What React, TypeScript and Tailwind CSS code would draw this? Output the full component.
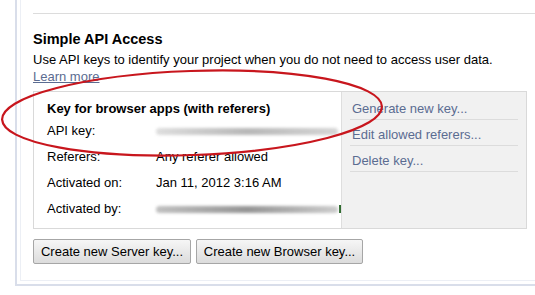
import React from "react";

const font = { fontFamily: '"Liberation Sans", Arial, sans-serif' };

const ROWS = [
  { label: "API key:", value: "blur" },
  { label: "Referers:", value: "Any referer allowed" },
  { label: "Activated on:", value: "Jan 11, 2012 3:16 AM" },
  { label: "Activated by:", value: "blur2" },
];

const ACTIONS = ["Generate new key...", "Edit allowed referers...", "Delete key..."];

function Smear({ green }: { green?: boolean }) {
  return (
    <div className="relative flex h-[26px] items-center">
      <div
        className={`h-[7px] w-[182px] rounded-sm bg-gradient-to-r blur-[1.5px] ${
          green
            ? "from-[#b0b0b0] via-[#7a7a7a] to-[#c0c0c0] opacity-80"
            : "from-[#d0d0d0] via-[#9a9a9a] to-[#c4c4c4] opacity-70"
        }`}
      />
      {green && <span className="ml-[1px] h-[8px] w-[2px] bg-[#2f6b2f]" />}
    </div>
  );
}

export default function App() {
  return (
    <div className="relative h-[295px] w-[535px] overflow-hidden bg-white text-[13px] text-black" style={font}>
      {/* outer frame */}
      <div className="ml-[15px] w-[540px] border-b-2 border-l-2 border-[#d9deea] pb-[3px] pl-[3px]">
        <div className="border-b border-l border-[#eceff5] pb-[16px] pl-[12px]">
          <div className="pt-[13px]">
            <div className="border-t border-[#dcdcdc] pt-[17px]">
              <h2 className="text-[14.5px] font-bold leading-[16px]">Simple API Access</h2>
              <p className="mt-[4px] leading-[18px]">
                Use API keys to identify your project when you do not need to access user data.
              </p>
              <a className="block leading-[16px] text-[#5b6c91] underline">Learn more</a>
            </div>
          </div>

          {/* key box */}
          <div className="mt-[6px] flex h-[138px] w-[494px] border border-[#d9d9d9]">
            <div className="w-[307px] bg-white pl-[13px] pt-[9px]">
              <div className="font-bold leading-[16px]">Key for browser apps (with referers)</div>
              <div className="mt-[1px]">
                {ROWS.map((r) => (
                  <div key={r.label} className="flex h-[26px] leading-[26px]">
                    <span className="w-[109px]">{r.label}</span>
                    {r.value === "blur" ? (
                      <Smear />
                    ) : r.value === "blur2" ? (
                      <Smear green />
                    ) : (
                      <span>{r.value}</span>
                    )}
                  </div>
                ))}
              </div>
            </div>
            <div className="flex-1 border-l border-[#dedede] bg-[#f1f1f1] px-[8px] pt-[2px]">
              {ACTIONS.map((a) => (
                <div key={a} className="border-b border-[#dcdcdc] pb-[2px] pl-[2px] pt-[7px] leading-[16px] text-[#5b6c91]">
                  {a}
                </div>
              ))}
            </div>
          </div>

          {/* buttons */}
          <div className="mt-[10px] flex gap-[5px]">
            <button className="h-[25px] w-[158px] rounded-[2px] border border-[#a6a6a6] bg-gradient-to-b from-[#f6f6f6] to-[#dcdcdc] text-[13px]">
              Create new Server key...
            </button>
            <button className="h-[25px] w-[167px] rounded-[2px] border border-[#a6a6a6] bg-gradient-to-b from-[#f6f6f6] to-[#dcdcdc] text-[13px]">
              Create new Browser key...
            </button>
          </div>
        </div>
      </div>

      {/* red hand-drawn ellipse */}
      <svg className="pointer-events-none absolute left-0 top-0" width="535" height="295" viewBox="0 0 535 295">
        <ellipse
          cx="192"
          cy="113"
          rx="190"
          ry="42"
          transform="rotate(-2 192 113)"
          fill="none"
          stroke="#c8161d"
          strokeWidth="2.2"
        />
      </svg>
    </div>
  );
}
